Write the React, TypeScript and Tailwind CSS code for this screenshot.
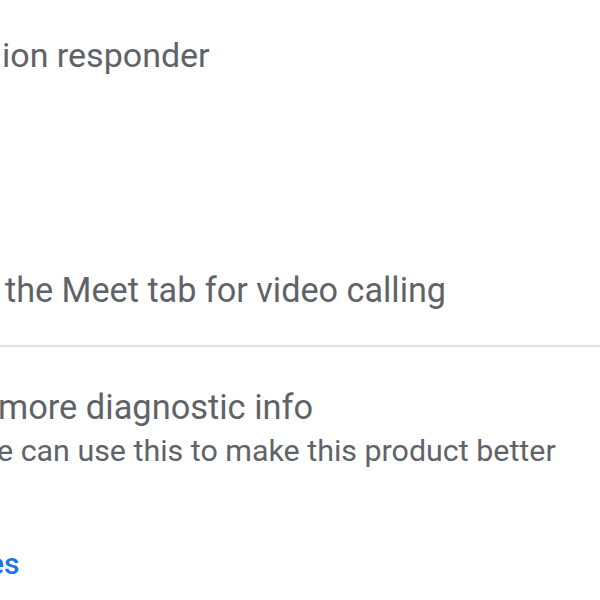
export default function App() {
  return (
    <div className="w-[600px] h-[600px] overflow-hidden bg-white text-[#5f6368]" style={{ fontFamily: 'Roboto, "Noto Sans", sans-serif' }}>
      <div className="pt-[35px] h-[270px]">
        <div className="text-[34px] leading-[40px] ml-[2px] whitespace-nowrap">ion responder</div>
      </div>
      <div className="text-[34.2px] leading-[40px] ml-[5px] whitespace-nowrap">the Meet tab for video calling</div>
      <div className="h-[35px]" />
      <div className="h-[2px] bg-[#e0e0e0]" />
      <div className="pt-[40px]">
        <div className="text-[34.4px] leading-[40px] -ml-[2px] whitespace-nowrap">more diagnostic info</div>
        <div className="text-[30.4px] leading-[40px] mt-[4px] -ml-[3px] whitespace-nowrap">e can use this to make this product better</div>
      </div>
      <div className="mt-[73px] text-[30px] leading-[40px] font-medium text-[#1a73e8] -ml-[12px] whitespace-nowrap">es</div>
    </div>
  );
}
